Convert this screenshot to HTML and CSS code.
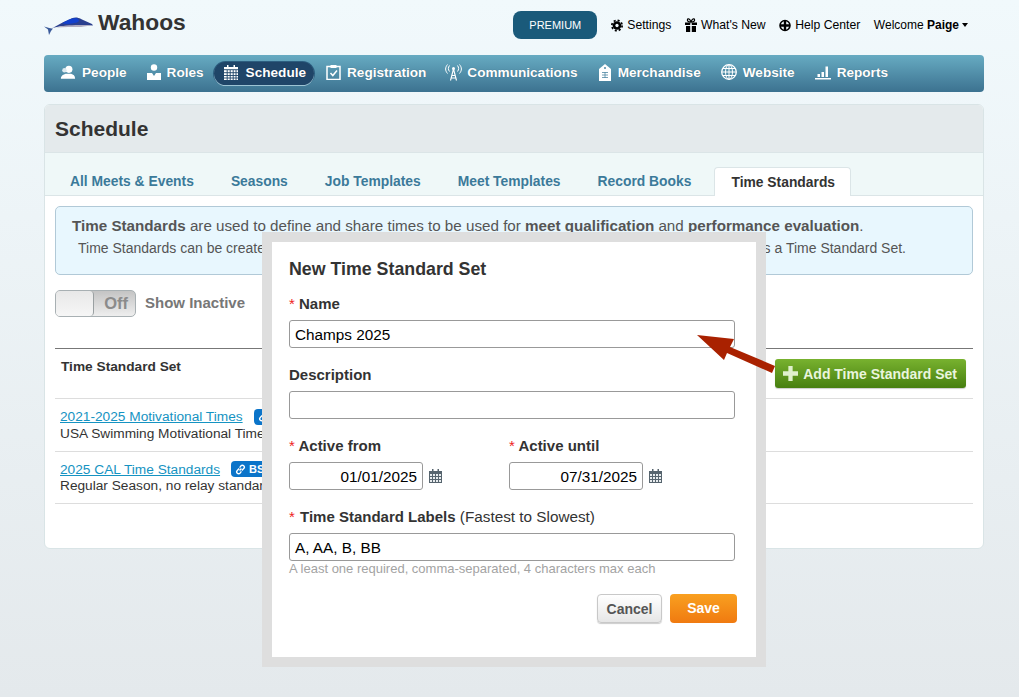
FILE: index.html
```html
<!DOCTYPE html>
<html lang="en">
<head>
<meta charset="utf-8">
<title>Wahoos - Time Standards</title>
<link rel="stylesheet" href="styles.css">
</head>
<body>
<div class="page">
  <header class="top">
    <div class="brand">
      <svg class="logo" width="50" height="24" viewBox="0 0 50 24"><path d="M5 15.500C12 12.500 17 9 24 6c3-1.500 6-3 9-2.500 2 .5 3 1 5 2l10 4.500 1 1.500-10-.5-4 1.500-16-.5c-5 .5-10 1.500-14 3z" fill="#2a3f8e"/><path d="M18 9.500c4-2.500 9-5.500 14-5.500 2 .5 3 1.500 3 3-1 1.500-4 2-7 2.500-3 .5-6 .5-10 0z" fill="#1240cc"/><path d="M12 13.500c8-2.500 22-3 36-2-1 .5-8 .5-11 1.500-9 0-17 0-25 .5z" fill="#b0acc0"/><path d="M7 14.500L0 12.500l4 3 1 5.500 2-4 2-2.500z" fill="#3a5a9a"/></svg>
      <span class="brand-name">Wahoos</span>
    </div>
    <div class="top-links">
      <a class="premium">PREMIUM</a>
      <a class="top-link"><svg class="ti" width="12" height="13" viewBox="0 0 14 14"><circle cx="7" cy="7" r="5" fill="#000"/><circle cx="7" cy="7" r="6" fill="none" stroke="#000" stroke-width="2" stroke-dasharray="2.400 2.310"/><circle cx="7" cy="7" r="1.900" fill="#f0f8fb"/></svg>Settings</a>
      <a class="top-link"><svg class="ti" width="12" height="14" viewBox="0 0 12 14"><path d="M0 4.500h5.200V7H0zM6.800 4.500H12V7H6.800zM1 8h4.200v6H1zM6.800 8H11v6H6.800z" fill="#000"/><path d="M6 4C3 4 2 2.800 2.500 1.500S5 .8 6 4c1-3.200 3-3.800 3.500-2.500S9 4 6 4z" fill="none" stroke="#000" stroke-width="1.200"/></svg>What's New</a>
      <a class="top-link"><svg class="ti" width="12" height="13" viewBox="0 0 14 14"><circle cx="7" cy="7" r="5.800" fill="#f0f8fb" stroke="#000" stroke-width="1.800"/><path d="M7 1v12M1 7h12" stroke="#000" stroke-width="2.800"/></svg>Help Center</a>
      <a class="welcome">Welcome <b>Paige</b><span class="caret"></span></a>
    </div>
  </header>

  <nav class="nav">
    <a class="nav-item"><svg width="16" height="16" viewBox="0 0 18 16"><circle cx="10" cy="5" r="4" fill="#fff"/><path d="M1 15.500c0-3.500 3-4.500 5.500-5.500h6c2.500 1 4.500 2 4.500 5.500z" fill="#fff"/><circle cx="5" cy="6" r="2.500" fill="#dceaf0"/></svg>People</a>
    <a class="nav-item"><svg width="14" height="16" viewBox="0 0 14 16"><circle cx="7" cy="3.500" r="3.200" fill="#fff"/><path d="M0 9h5l2 3 2-3h5v7H0z" fill="#fff"/></svg>Roles</a>
    <a class="nav-item active"><svg width="14" height="15" viewBox="0 0 14 15"><path d="M0 2h14v13H0z" fill="#fff"/><path d="M3 0h1.500v3H3zM9.500 0H11v3H9.500z" fill="#fff"/><path d="M3.200 5v10M6.200 5v10M9.200 5v10M12 5v10M0 4.700h14M0 7.700h14M0 10.500h14M0 13h14" stroke="#1d4468" stroke-width=".9"/></svg>Schedule</a>
    <a class="nav-item after-active"><svg width="15" height="16" viewBox="0 0 15 16"><path d="M1 2.500h13v13H1z" fill="none" stroke="#fff" stroke-width="1.500"/><path d="M4.500 1h6v3h-6z" fill="#fff"/><path d="M4.500 9l2.300 2.500L11 6.500" fill="none" stroke="#fff" stroke-width="1.500"/></svg>Registration</a>
    <a class="nav-item comm"><svg width="17" height="17" viewBox="0 0 17 17"><circle cx="8.500" cy="4.500" r="1.500" fill="#fff"/><path d="M8.500 5L5.500 16.500M8.500 5l3 11.500M6.500 11.500h4M6 14h5" stroke="#fff" stroke-width="1.100" fill="none"/><path d="M4.500 1.500c-1.500 2-1.500 4 0 6M2.500.5c-2.500 3-2.500 6 0 9M12.500 1.500c1.500 2 1.500 4 0 6M14.500.5c2.500 3 2.500 6 0 9" stroke="#fff" fill="none"/></svg>Communications</a>
    <a class="nav-item"><svg width="14" height="17" viewBox="0 0 12 17"><path d="M6 0l3 2.500 3 2.500v12H0V5l3-2.500z" fill="#fff"/><path d="M3 8.500h6M3 11h6M3 13.500h6M6 8v6" stroke="#4f88a3" stroke-width=".8"/><circle cx="6" cy="4" r="1" fill="#4f88a3"/></svg>Merchandise</a>
    <a class="nav-item"><svg width="16" height="16" viewBox="0 0 16 16"><g fill="none" stroke="#fff"><circle cx="8" cy="8" r="7.300" stroke-width="1.300"/><ellipse cx="8" cy="8" rx="3.500" ry="7.300"/><path d="M8 .5v15M.8 8h14.400M1.800 4.500h12.400M1.800 11.500h12.400"/></g></svg>Website</a>
    <a class="nav-item"><svg width="16" height="15" viewBox="0 0 16 15"><path d="M0 13h16v1.500H0zM2.500 9H5v3H2.500zM6.500 7H9v5H6.500zM10.500 1.500H13V12h-2.500z" fill="#fff"/></svg>Reports</a>
  </nav>

  <main class="panel">
    <div class="panel-head"><h1>Schedule</h1></div>
    <div class="tabs">
      <a class="tab">All Meets &amp; Events</a>
      <a class="tab">Seasons</a>
      <a class="tab">Job Templates</a>
      <a class="tab">Meet Templates</a>
      <a class="tab">Record Books</a>
      <a class="tab current">Time Standards</a>
    </div>
    <div class="panel-body">
      <div class="info">
        <p class="info-lead"><b>Time Standards</b> are used to define and share times to be used for <b>meet qualification</b> and <b>performance evaluation</b>.</p>
        <p class="info-sub"><span>Time Standards can be created manually or imported, and each group of related times is saved together</span><span>as a Time Standard Set.</span></p>
      </div>
      <div class="toggle-row">
        <div class="toggle"><span class="knob"></span><span class="off">Off</span></div>
        <span class="toggle-label">Show Inactive</span>
      </div>
      <div class="table-head">
        <span class="th">Time Standard Set</span>
        <a class="add"><svg width="15" height="15" viewBox="0 0 14 14"><path d="M5 0h4v5h5v4H9v5H5V9H0V5h5z" fill="#dff0cd"/></svg>Add Time Standard Set</a>
      </div>
      <div class="row">
        <div class="row-top"><a class="link">2021-2025 Motivational Times</a><span class="badge"><svg width="11" height="11" viewBox="0 0 12 12"><path d="M5 7l2-2M4.500 5L2.500 7a2 2 0 003 3l1.500-2M7.500 7l2-2a2 2 0 00-3-3L5 4" fill="none" stroke="#fff" stroke-width="1.500"/></svg>BSS</span></div>
        <div>USA Swimming Motivational Times</div>
      </div>
      <div class="row">
        <div class="row-top"><a class="link">2025 CAL Time Standards</a><span class="badge"><svg width="11" height="11" viewBox="0 0 12 12"><path d="M5 7l2-2M4.500 5L2.500 7a2 2 0 003 3l1.500-2M7.500 7l2-2a2 2 0 00-3-3L5 4" fill="none" stroke="#fff" stroke-width="1.500"/></svg>BSS</span></div>
        <div>Regular Season, no relay standards</div>
      </div>
    </div>
  </main>
</div>

<div class="modal">
  <h2>New Time Standard Set</h2>
  <label class="field-label first"><i>*</i> Name</label>
  <div class="input">Champs 2025</div>
  <label class="field-label desc">Description</label>
  <div class="input"></div>
  <div class="dates">
    <div class="date-col">
      <label class="field-label"><i>*</i> Active from</label>
      <div class="date-wrap"><div class="input date">01/01/2025</div><svg width="13" height="14" viewBox="0 0 13 14"><use href="#cal"/></svg></div>
    </div>
    <div class="date-col">
      <label class="field-label"><i>*</i> Active until</label>
      <div class="date-wrap"><div class="input date">07/31/2025</div><svg width="13" height="14" viewBox="0 0 13 14"><use href="#cal"/></svg></div>
    </div>
  </div>
  <label class="field-label labels"><i class="star-wide">*</i>&nbsp;Time Standard Labels <span>(Fastest to Slowest)</span></label>
  <div class="input">A, AA, B, BB</div>
  <div class="hint">A least one required, comma-separated, 4 characters max each</div>
  <div class="actions">
    <a class="btn cancel">Cancel</a>
    <a class="btn save">Save</a>
  </div>
</div>

<svg class="arrow" width="80" height="42" viewBox="0 0 80 42"><path d="M0 1l37 4-4 8 45 19-3 7-45-20-3 7z" fill="#a92100"/></svg>

<svg class="defs" width="0" height="0"><defs><g id="cal"><path d="M0 2h13v12H0z" fill="#56646e"/><path d="M3 0h1.500v3H3zM8.500 0H10v3H8.500z" fill="#56646e"/><path d="M1 5h2v2H1zM4 5h2v2H4zM7 5h2v2H7zM10 5h2v2h-2zM1 8h2v2H1zM4 8h2v2H4zM7 8h2v2H7zM10 8h2v2h-2zM1 11h2v2H1zM4 11h2v2H4zM7 11h2v2H7zM10 11h2v2h-2z" fill="#e8ecee"/></g></defs></svg>
</body>
</html>
```
FILE: styles.css
```css
* { box-sizing: border-box; }
html, body { height: 100%; }
body {
  margin: 0;
  overflow: hidden;
  position: relative;
  font-family: "Liberation Sans", Arial, sans-serif;
  font-size: 14px;
  color: #333;
  background: linear-gradient(#f1f9fc, #e4e9ec);
}
a { text-decoration: none; }
.page { width: 940px; margin-left: 44px; }

.top { height: 55px; display: flex; justify-content: space-between; }
.brand { display: flex; align-items: flex-start; }
.logo { margin-top: 14px; }
.brand-name { margin: 9px 0 0 4px; font-size: 22.800px; font-weight: bold; line-height: 26px; color: #333; }
.top-links { display: flex; align-items: flex-start; margin-right: 16px; padding-top: 11px; font-size: 12.200px; color: #000; }
.premium {
  width: 84px; height: 28px; margin-right: 14px;
  border-radius: 8px; background: #1a5a7a; color: #fff;
  font-size: 11px; line-height: 28px; text-align: center;
}
.top-link { display: flex; align-items: center; height: 28px; margin-right: 13.600px; }
.ti { margin-right: 4px; }
.welcome { height: 28px; font-size: 12px; line-height: 28px; }
.caret {
  display: inline-block; margin-left: 3px; vertical-align: 2px;
  border-top: 4px solid #000; border-left: 3.500px solid transparent; border-right: 3.500px solid transparent;
}

.nav {
  height: 37px; display: flex; align-items: center; padding-left: 6px;
  border-radius: 4px;
  background: linear-gradient(#67abc2, #3c7290);
}
.nav-item {
  display: flex; align-items: center; gap: 6px; height: 23px; padding: 0 10px 3px;
  color: #fff; font-size: 13.600px; font-weight: bold; text-shadow: 0 0 1px rgba(0,0,0,.3);
}
.nav-item.active {
  gap: 8px; padding-right: 8px; border-radius: 12px;
  background: #1f4568; box-shadow: 0 1px 0 #9cc3d3, 0 0 0 1px #2d5f80;
}
.after-active { margin-left: 2px; }
.nav-item.comm { gap: 5px; padding-left: 9px; }

.panel {
  margin-top: 12px; height: 445px;
  border: 1px solid #d9e4e6; border-radius: 6px;
  background: #fff; overflow: hidden;
}
.panel-head { height: 48px; padding-left: 10px; background: #e4eaec; border-bottom: 1px solid #dbe5e7; }
h1 { margin: 0; font-size: 21px; line-height: 48px; color: #333; }
.tabs {
  height: 43px; display: flex; align-items: flex-end; padding-left: 7px;
  background: #eff8f8; border-bottom: 1px solid #dbe5e7;
}
.tab {
  height: 29px; padding: 0 18px; margin-right: 1px;
  color: #3b7a9a; font-size: 13.850px; font-weight: bold; line-height: 30px;
}
.tab.current {
  height: 29px; margin: 0 0 -1px 4px; padding: 0 15px 0 16px; background: #fff; color: #333;
  border: 1px solid #dbe5e7; border-bottom: 0; border-radius: 4px 4px 0 0; line-height: 28px;
}
.panel-body { padding: 10px 10px 0; }
.info {
  height: 69px; padding: 9px 16px; color: #555;
  border: 1px solid #b1c9d7; border-radius: 5px; background: #e8f7fe;
}
.info p { margin: 0; }
.info-lead { font-size: 15.200px; line-height: 19px; }
.info-sub { display: flex; justify-content: space-between; margin-top: 4px !important; padding: 0 50px 0 6px; font-size: 14px; line-height: 18px; white-space: nowrap; overflow: hidden; }
.toggle-row { display: flex; align-items: center; gap: 9px; margin-top: 15px; }
.toggle {
  width: 81px; height: 27px; display: flex; justify-content: flex-end; align-items: center;
  border: 1px solid #a8b0b3; border-radius: 5px;
  background: linear-gradient(#c4c4c4, #eee);
  position: relative; padding-right: 7px;
}
.knob {
  position: absolute; left: 0; top: 0; width: 38px; height: 25px;
  border-right: 1px solid #9aa0a2; border-radius: 4px; background: linear-gradient(#e8e8e8, #f6f6f6);
}
.off { color: #8b8b8b; font-size: 16.500px; font-weight: bold; }
.toggle-label { padding-bottom: 2px; color: #777; font-size: 15px; font-weight: bold; }
.table-head {
  height: 51px; margin-top: 31px; padding: 10px 7px 0 6px;
  display: flex; justify-content: space-between;
  border-top: 1px solid #777; border-bottom: 1px solid #ddd;
}
.th { font-size: 13.700px; font-weight: bold; line-height: 16px; color: #333; }
.add {
  display: flex; align-items: center; gap: 5px; height: 29px; padding: 0 9px 0 8px;
  border-radius: 3px; color: #e9f5dd; font-size: 14px; font-weight: bold;
  background: linear-gradient(#78b22f, #477f10);
  box-shadow: 0 1px 1px rgba(0,0,0,.2);
}
.row { height: 52.500px; padding: 9px 0 0 5px; border-bottom: 1px solid #ddd; font-size: 13.700px; line-height: 17px; }
.row-top { display: flex; align-items: center; gap: 11px; margin-bottom: -.3px; }
.link { color: #1593c2; text-decoration: underline; }
.badge { display: flex; align-items: center; gap: 3px; padding: 1px 8px 1px 4px; border-radius: 4px; background: #0b74c9; color: #fff; font-size: 11px; font-weight: bold; line-height: 14px; }

.modal {
  position: absolute; left: 262px; top: 232px; width: 504px; height: 435px;
  padding: 17px 17px 0;
  background: #fff; border: 10px solid #dedede;
}
h2 { margin: 0; font-size: 17.800px; line-height: 20px; color: #333; }
.field-label { display: block; font-size: 15px; font-weight: bold; line-height: 17px; color: #333; }
.field-label i { color: #e22; font-style: normal; font-weight: normal; }
.field-label i.star-wide { margin-right: 1px; }
.field-label span { font-size: 15.300px; font-weight: normal; }
.first { margin-top: 16px; margin-bottom: 8px; }
.desc { margin-top: 18px; margin-bottom: 8px; }
.input {
  height: 28px; padding: 0 5px; width: 446px;
  border: 1px solid #999; border-radius: 3px; background: #fff;
  color: #000; font-size: 15.300px; line-height: 27px;
}
.dates { display: flex; gap: 86px; margin-top: 18px; }
.date-col { width: 134px; }
.date-col .field-label { margin-bottom: 8px; }
.date-wrap { display: flex; align-items: center; gap: 6px; width: 160px; }
.input.date { width: 134px; flex: none; text-align: right; }
.labels { margin-top: 18px; margin-bottom: 8px; }
.hint { color: #a3a3a3; font-size: 13px; line-height: 15px; }
.actions { display: flex; justify-content: flex-end; gap: 8px; margin: 18px 2px 0 0; }
.btn { height: 29px; border-radius: 4px; font-size: 14px; font-weight: bold; line-height: 29px; text-align: center; }
.cancel { width: 65px; color: #555; border: 1px solid #c8c8c8; line-height: 28px; background: linear-gradient(#fff, #e6e6e6); box-shadow: 0 1px 1px rgba(0,0,0,.2); }
.save { width: 67px; color: #fff; background: linear-gradient(#f9a020, #f07a10); }

.arrow { position: absolute; left: 697px; top: 334px; }
.defs { position: absolute; }
```
